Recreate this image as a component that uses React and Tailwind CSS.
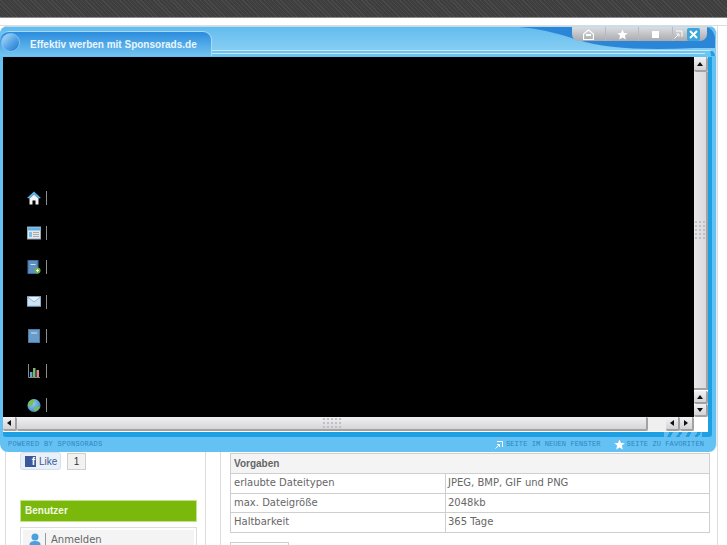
import { useId } from "react";

const sansStack = { fontFamily: '"DejaVu Sans", sans-serif' };
const arialStack = { fontFamily: '"Liberation Sans", sans-serif' };

function ArrowIcon({ dir }) {
  const paths = {
    up: "M1 6 L4 2 L7 6 Z",
    down: "M1 2 L4 6 L7 2 Z",
    left: "M6 1 L2 4 L6 7 Z",
    right: "M2 1 L6 4 L2 7 Z",
  };
  return (
    <svg width="8" height="8" viewBox="0 0 8 8">
      <path d={paths[dir]} fill="#111" />
    </svg>
  );
}

function ScrollBtn({ dir, className = "" }) {
  return (
    <div
      className={
        "flex items-center justify-center rounded-[2px] bg-gradient-to-b from-[#f2f2f4] to-[#d4d4d8] border-r-2 border-b-2 border-[#a2a2a2] " +
        className
      }
    >
      <ArrowIcon dir={dir} />
    </div>
  );
}

function Grip({ cols, rows }) {
  return (
    <div className="flex flex-col gap-[2px]">
      {Array.from({ length: rows }).map((_, r) => (
        <div key={r} className="flex gap-[2px]">
          {Array.from({ length: cols }).map((_, c) => (
            <div key={c} className="w-[2px] h-[2px] bg-[#c0c0c4]" />
          ))}
        </div>
      ))}
    </div>
  );
}

function HomeIcon() {
  return (
    <svg width="14" height="14" viewBox="0 0 14 14">
      <path d="M7 0.5 L14 7 L11.5 7.5 L7 3.5 L2.5 7.5 L0 7 Z" fill="#58b4ea" />
      <path d="M2.5 7.5 L7 3.5 L11.5 7.5 V13.5 H8.5 V9.5 H5.5 V13.5 H2.5 Z" fill="#f4f4f4" />
    </svg>
  );
}

function WindowIcon() {
  return (
    <svg width="14" height="14" viewBox="0 0 14 14">
      <rect x="0.5" y="1" width="13" height="12" fill="#e8e8e8" stroke="#8fa9c0" />
      <rect x="1" y="1.5" width="12" height="3" fill="#5fb4ec" />
      <rect x="2" y="6" width="3" height="5" fill="#7cc0ef" />
      <rect x="6" y="6" width="6" height="1" fill="#aaa" />
      <rect x="6" y="8" width="6" height="1" fill="#aaa" />
      <rect x="6" y="10" width="6" height="1" fill="#aaa" />
    </svg>
  );
}

function BookPlusIcon() {
  return (
    <svg width="14" height="14" viewBox="0 0 14 14">
      <rect x="1" y="0.5" width="10" height="13" fill="#5e8fc0" stroke="#3f6d9e" />
      <rect x="3.5" y="4" width="5" height="1" fill="#cfe0f0" />
      <circle cx="10.5" cy="10.5" r="3" fill="#68b43c" />
      <path d="M9 10.5 H12 M10.5 9 V12" stroke="#fff" strokeWidth="1" />
    </svg>
  );
}

function MailIcon() {
  return (
    <svg width="15" height="11" viewBox="0 0 15 11">
      <rect x="0.5" y="0.5" width="14" height="10" fill="#cfe2f4" stroke="#8fb4d8" />
      <path d="M0.5 0.5 L7.5 6 L14.5 0.5" fill="#e6f1fb" stroke="#8fb4d8" />
    </svg>
  );
}

function BookIcon() {
  return (
    <svg width="12" height="14" viewBox="0 0 12 14">
      <rect x="0.5" y="0.5" width="11" height="13" fill="#6a9cc8" stroke="#4a7aa8" />
      <rect x="3" y="3.5" width="6" height="1" fill="#d5e4f2" />
    </svg>
  );
}

function ChartIcon() {
  return (
    <svg width="12" height="14" viewBox="0 0 12 14">
      <path d="M0.5 0 V13.5 H12" fill="none" stroke="#8a8a8a" />
      <rect x="2" y="8" width="2.5" height="5" fill="#5fa8dc" />
      <rect x="5" y="4" width="2.5" height="9" fill="#7cb86a" />
      <rect x="8.5" y="6" width="2.5" height="7" fill="#d88a8a" />
    </svg>
  );
}

function GlobeIcon() {
  const id = useId();
  return (
    <svg width="15" height="15" viewBox="0 0 15 15">
      <defs>
        <radialGradient id={id} cx="0.4" cy="0.35" r="0.7">
          <stop offset="0" stopColor="#8fd0f2" />
          <stop offset="1" stopColor="#3f86c0" />
        </radialGradient>
      </defs>
      <circle cx="7.5" cy="7.5" r="7" fill={"url(#" + id + ")"} />
      <path d="M1 6 Q3 1.5 7 1 Q9 3 6.5 4.5 Q7 7 4 8 Q2 8 1 6 Z" fill="#7cc04a" />
      <path d="M8 14 Q12 13 14 9 Q11 8 9 9.5 Q7 11 8 14 Z" fill="#7cc04a" />
    </svg>
  );
}

function NavIcon({ children }) {
  return (
    <div className="flex items-center h-[14px] mb-[20.5px]">
      <div className="w-[14px] flex justify-center">{children}</div>
      <div className="ml-[5px] w-px h-[14px] bg-[#8d8d8d]" />
    </div>
  );
}

function OverlayHeader() {
  return (
    <div className="relative h-[30px] bg-gradient-to-b from-[#62bcee] to-[#8fd2f4] border-t border-[#b8def4]">
      <svg className="absolute right-0 top-0" width="200" height="24" viewBox="0 0 200 24">
        <path d="M3 0 H190 Q197 1 199 10 V21 H178 Q100 25 62 13 Q30 2 3 0 Z" fill="#2b86d8" />
      </svg>

      {/* band over the frame, right of the tab */}
      <div className="absolute left-[212px] right-[1px] top-[23px] h-[6px] bg-[#6cc4f2] border-t border-[#c6e9fa] border-r-[4px] border-r-[#1d9fe3] rounded-tr-[6px]">
        <div className="mt-[2px] h-px bg-[#c6e9fa] mr-[6px]" />
      </div>

      <div className="absolute left-0 top-[4px] w-[212px] h-[25px] rounded-t-[9px] bg-gradient-to-b from-[#2a8cdc] to-[#72c4f1] border-t border-r border-[#a8daf5] flex items-start">
        <div className="ml-[1px] mt-[1px] w-[19px] h-[19px] rounded-full bg-gradient-to-br from-[#bcdcf6] via-[#5aa8e8] to-[#1d74c8] border border-[#7cc4f0]" />
        <span className="ml-[10px] mt-[6px] whitespace-nowrap text-[10px] leading-[13px] font-bold text-[#e8f6ff]" style={arialStack}>
          Effektiv werben mit Sponsorads.de
        </span>
      </div>

      <div className="absolute right-[9px] top-0 w-[135px] h-[14px] rounded-b-[7px] bg-gradient-to-b from-[#dcdde0] to-[#a9abb0] flex items-center text-white">
        <div className="w-[34px] h-full flex items-center justify-center border-r border-[#b9babd]">
          <svg width="11" height="11" viewBox="0 0 11 11">
            <path d="M5.5 1 L10.5 5 V10.5 H0.5 V5 Z" fill="none" stroke="#fff" strokeWidth="1.2" />
            <rect x="3" y="5" width="5" height="2" fill="#fff" />
          </svg>
        </div>
        <div className="w-[33px] h-full flex items-center justify-center border-r border-[#b9babd]">
          <svg width="11" height="11" viewBox="0 0 11 11">
            <path d="M5.5 0.5 L7 4 L10.7 4.2 L7.9 6.6 L8.8 10.4 L5.5 8.4 L2.2 10.4 L3.1 6.6 L0.3 4.2 L4 4 Z" fill="#fff" />
          </svg>
        </div>
        <div className="w-[34px] h-full flex items-center justify-center border-r border-[#b9babd]">
          <div className="w-[7px] h-[7px] bg-white" />
        </div>
        <div className="flex-1 flex items-center pl-[1px] gap-[4px]">
          <svg width="9" height="9" viewBox="0 0 9 9">
            <path d="M2 1 H8 V7 M0.5 8.5 L4.5 4.5 M2.5 4 H5 V6.5" fill="none" stroke="#fff" strokeWidth="1" />
          </svg>
          <div className="w-[13px] h-[13px] rounded-[2px] bg-[#3ba5dc] flex items-center justify-center">
            <svg width="9" height="9" viewBox="0 0 9 9">
              <path d="M1 1 L8 8 M8 1 L1 8" stroke="#fff" strokeWidth="2" />
            </svg>
          </div>
        </div>
      </div>
    </div>
  );
}

function Overlay() {
  return (
    <div className="absolute left-0 top-[26px] w-[717px] h-[426px] bg-[#64c1f3] rounded-[8px] border-r border-[#d8ecf8] overflow-hidden flex flex-col">
      <OverlayHeader />
      <div className="ml-[3px] mr-[4px] flex bg-white border-r-[4px] border-[#1d9fe3] h-[375px] shrink-0 mt-px">
        <div className="w-[691px] flex flex-col">
          <div className="h-[360px] bg-black pl-[24px] pt-[134px] overflow-hidden">
            <NavIcon><HomeIcon /></NavIcon>
            <NavIcon><WindowIcon /></NavIcon>
            <NavIcon><BookPlusIcon /></NavIcon>
            <NavIcon><MailIcon /></NavIcon>
            <NavIcon><BookIcon /></NavIcon>
            <NavIcon><ChartIcon /></NavIcon>
            <NavIcon><GlobeIcon /></NavIcon>
          </div>
          <div className="h-[14px] flex bg-[#efeff0]">
            <ScrollBtn dir="left" className="w-[14px]" />
            <div className="w-[631px] flex items-center justify-center rounded-[2px] bg-gradient-to-b from-[#f0f0f2] to-[#d6d6da] border-r-2 border-b-2 border-[#a2a2a2]">
              <Grip cols={5} rows={3} />
            </div>
            <div className="w-[18px]" />
            <ScrollBtn dir="left" className="w-[14px]" />
            <ScrollBtn dir="right" className="w-[14px]" />
          </div>
        </div>
        <div className="w-[14px] flex flex-col">
          <ScrollBtn dir="up" className="h-[15px]" />
          <div className="h-[318px] flex items-center justify-center bg-gradient-to-r from-[#e8e8ec] to-[#dadade] border-r-2 border-b-2 border-[#a2a2a2]">
            <Grip cols={3} rows={5} />
          </div>
          <div className="h-[1px] bg-white" />
          <ScrollBtn dir="up" className="h-[13px]" />
          <ScrollBtn dir="down" className="h-[13px]" />
          <div className="flex-1 bg-white" />
        </div>
      </div>
      <div className="h-[5px] ml-[3px] mr-[4px] bg-[#1d9fe3] rounded-b-[3px] flex justify-end shrink-0">
        <div className="w-[38px] mr-[10px] h-full bg-[repeating-linear-gradient(120deg,#62bcf0_0px,#62bcf0_5px,#1d9fe3_5px,#1d9fe3_8px)]" />
      </div>
      <div
        className="flex-1 flex items-center pl-[8px] pr-[12px] text-[7px] text-[#2f86c4] uppercase"
        style={{ fontFamily: '"Liberation Mono", monospace' }}
      >
        <span className="tracking-[0.3px]">Powered by Sponsorads</span>
        <svg className="ml-auto" width="8" height="8" viewBox="0 0 8 8">
          <path d="M2 0.5 H7.5 V6 M0.5 7.5 L4 4 M2 3.5 H4.5 V6" fill="none" stroke="#fff" strokeWidth="1" />
        </svg>
        <span className="ml-[3px] tracking-[0.1px]">Seite im neuen Fenster</span>
        <svg className="ml-[13px]" width="11" height="11" viewBox="0 0 11 11">
          <path d="M5.5 0.5 L7 4 L10.7 4.2 L7.9 6.6 L8.8 10.4 L5.5 8.4 L2.2 10.4 L3.1 6.6 L0.3 4.2 L4 4 Z" fill="#fff" />
        </svg>
        <span className="ml-[2px] tracking-[0.1px]">Seite zu Favoriten</span>
      </div>
    </div>
  );
}

function Sidebar() {
  return (
    <div className="ml-[5px] w-[201px] border-x border-[#dcdcdc] pl-[14px] pr-[8px] pt-[426px] shrink-0">
      <div className="flex items-center h-[18px]">
        <div className="w-[41px] h-[18px] rounded-[3px] bg-[#eaf0f8] border border-[#d5dfee] flex items-center pl-[4px] gap-[3px]">
          <div className="w-[11px] h-[11px] bg-[#3b5998] text-white text-[10px] font-bold leading-[12px] text-right pr-[1px]" style={arialStack}>
            f
          </div>
          <span className="text-[10px] text-[#3b5998]" style={arialStack}>Like</span>
        </div>
        <div className="ml-[6px] w-[19px] h-[17px] bg-[#f2f2f2] border border-[#cfcfcf] flex items-center justify-center text-[10px] text-[#333]" style={arialStack}>
          1
        </div>
      </div>
      <div
        className="mt-[30px] h-[22px] pb-[1px] bg-[#7ab80c] border border-[#c5e08e] flex items-center pl-[4px] text-[10px] font-bold text-[#f2f8e4]"
        style={arialStack}
      >
        Benutzer
      </div>
      <div className="mt-[5px] h-[40px] border border-[#dddddd] p-[2px]">
        <div className="h-full bg-[#f4f4f4] flex items-start pt-[3px] pl-[6px]">
          <svg width="12" height="15" viewBox="0 0 12 15">
            <circle cx="6" cy="4" r="3.5" fill="#4a9fdc" />
            <path d="M0.5 15 V11 Q1 8 6 8 Q11 8 11.5 11 V15 Z" fill="#4a9fdc" />
          </svg>
          <div className="ml-[4px] w-px h-[15px] bg-[#9a9a9a]" />
          <span className="ml-[5px] mt-[2px] text-[10px] leading-[10px] text-[#666]" style={sansStack}>Anmelden</span>
        </div>
      </div>
    </div>
  );
}

function Row({ label, value }) {
  return (
    <div className="flex border-t border-[#cfcfcf] h-[19.5px] items-center">
      <div className="w-[215px] pl-[3px] pb-[1px] border-r border-[#cfcfcf] h-full flex items-center">{label}</div>
      <div className="pl-[2px] pb-[1px]">{value}</div>
    </div>
  );
}

function MainColumn() {
  return (
    <div className="ml-[14px] flex-1 border-l border-[#dcdcdc] pl-[9px] pt-[427px] border-r mr-[9px] pr-[7px] min-w-0">
      <div className="border border-[#cfcfcf] text-[10px] text-[#666]" style={sansStack}>
        <div className="h-[19px] bg-[#f4f4f4] pl-[3px] pb-[1px] flex items-center font-bold" style={arialStack}>Vorgaben</div>
        <Row label="erlaubte Dateitypen" value="JPEG, BMP, GIF und PNG" />
        <Row label="max. Dateigröße" value="2048kb" />
        <Row label="Haltbarkeit" value="365 Tage" />
      </div>
      <div className="mt-[9px] w-[59px] h-[20px] border border-[#cfcfcf]" />
    </div>
  );
}

export default function App() {
  return (
    <div className="relative w-[727px] h-[545px] overflow-hidden bg-white">
      <div className="h-[18px] border-b border-[#8a8a8a] bg-[repeating-linear-gradient(45deg,#4a4a4a_0px,#4a4a4a_1px,#3e3e3e_1px,#3e3e3e_3px)]" />
      <div className="h-[8px] border-b border-[#dddddd]" />
      <div className="flex h-[519px]">
        <Sidebar />
        <MainColumn />
      </div>
      <Overlay />
    </div>
  );
}
